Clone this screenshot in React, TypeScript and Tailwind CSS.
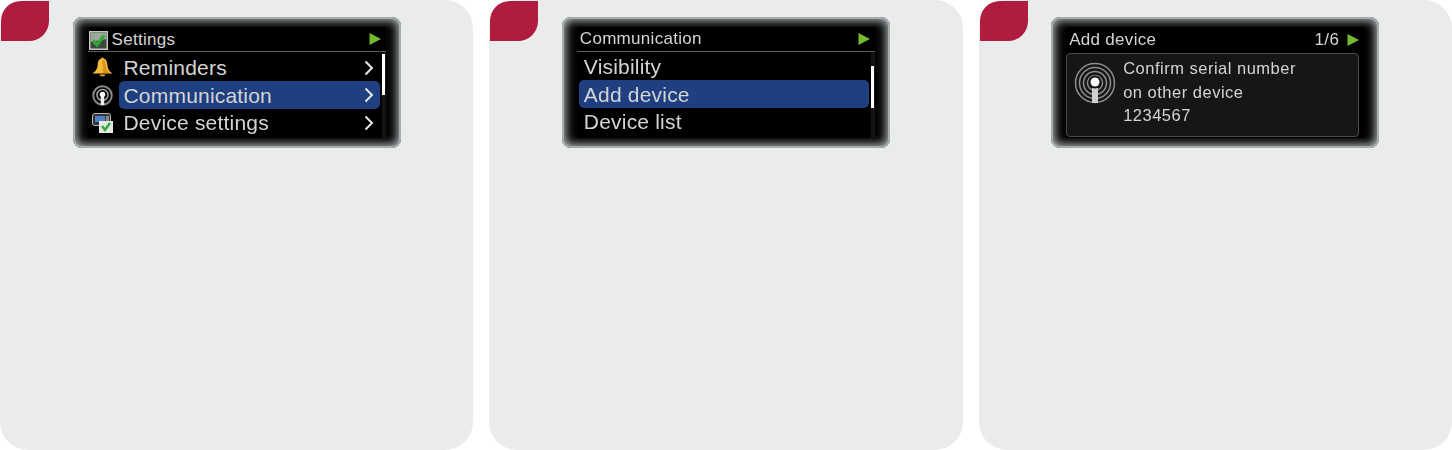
import type { ReactNode } from "react";

const font = { fontFamily: '"Liberation Sans", Arial, sans-serif' };

function PlayArrow() {
  return (
    <svg width="12" height="12" viewBox="0 0 12 12" className="shrink-0">
      <path d="M0.5 0 L12 6 L0.5 12 Z" fill="#74bb30" />
    </svg>
  );
}

function Chevron() {
  return (
    <svg width="10" height="16" viewBox="0 0 10 16" className="shrink-0">
      <path d="M1.5 1.5 L8 8 L1.5 14.5" fill="none" stroke="#e8e8e8" strokeWidth="2" />
    </svg>
  );
}

function CheckIcon() {
  return (
    <svg width="19" height="19" viewBox="0 0 19 19" className="shrink-0">
      <rect x="0.75" y="0.75" width="17.5" height="17.5" fill="#3c4a3c" stroke="#c4c8c4" strokeWidth="1.5" />
      <path d="M2 2 H17 V8 L2 11 Z" fill="#9aa89a" />
      <path d="M4 9.5 L8 14 L15 4.5" fill="none" stroke="#35a83a" strokeWidth="3.2" />
    </svg>
  );
}

function BellIcon() {
  return (
    <svg width="21" height="21" viewBox="0 0 21 21">
      <circle cx="10.5" cy="2" r="1.6" fill="#e0a020" />
      <path d="M10.5 1.5 C7 1.5 6 4 5.6 8 C5.3 12 4 14 0.5 16.5 L20.5 16.5 C17 14 15.7 12 15.4 8 C15 4 14 1.5 10.5 1.5 Z" fill="#f4ba38" />
      <path d="M10.5 3 C13 3 13.5 5 13.8 8 C14 12 15 14 17.5 16 L11 16 Z" fill="#d8931c" />
      <path d="M7.5 17.5 L13.5 17.5 C13 20 8 20 7.5 17.5 Z" fill="#e8a626" />
    </svg>
  );
}

function SmallSignalIcon() {
  return (
    <svg width="21" height="21" viewBox="0 0 42 42" className="shrink-0">
      <circle cx="21" cy="21" r="18.5" fill="none" stroke="#8a8a8a" strokeWidth="4" />
      <circle cx="21" cy="20" r="11" fill="none" stroke="#a6a6a6" strokeWidth="3" />
      <rect x="17.5" y="23" width="7" height="17" fill="#ececec" />
      <circle cx="21" cy="19" r="5.5" fill="#fff" />
    </svg>
  );
}

function LargeSignalIcon() {
  return (
    <svg width="42" height="42" viewBox="0 0 42 42" className="shrink-0">
      {[7.5, 11.5, 15.5, 19.5].map((r) => (
        <circle key={r} cx="21" cy="21" r={r} fill="none" stroke="#8e8e8e" strokeWidth="1.5" />
      ))}
      <rect x="18" y="24" width="6" height="17" fill="#cfcfcf" />
      <circle cx="21" cy="20" r="6.5" fill="#111" />
      <circle cx="21" cy="20" r="4.5" fill="#fff" />
    </svg>
  );
}

function DeviceSettingsIcon() {
  return (
    <svg width="21" height="20" viewBox="0 0 21 20">
      <rect x="0.5" y="0.5" width="18" height="12" rx="2.5" fill="#333" stroke="#b8b8b8" />
      <rect x="3" y="3" width="10" height="6" fill="#4f7fc4" />
      <rect x="14" y="3" width="3" height="6" fill="#8a8a8a" />
      <rect x="7" y="8" width="14" height="12" fill="#e4e8e4" />
      <path d="M10 13 L13 17 L18 10" fill="none" stroke="#36a83a" strokeWidth="2.5" />
    </svg>
  );
}

type Row = { label: string; icon?: ReactNode; active?: boolean };

function Menu({ rows, hasIcons, scrollClass }: { rows: Row[]; hasIcons: boolean; scrollClass: string }) {
  return (
    <div className="flex flex-1">
      <div className={`flex flex-1 flex-col ${hasIcons ? "pt-[2px]" : "pt-px"}`}>
        {rows.map((row) => (
          <div key={row.label} className="flex h-[27.5px] items-center">
            {hasIcons && <div className="flex w-[31px] shrink-0 justify-center pl-[3px] pr-[4px]">{row.icon}</div>}
            <div
              className={`flex h-[28px] flex-1 items-center justify-between rounded-[5px] pr-[6px] text-[21px] tracking-[0.2px] text-[#d4d4d4] ${
                hasIcons ? "pl-[5px]" : "ml-[2px] pl-[5px]"
              } ${row.active ? "bg-[#1f3f80]" : ""}`}
            >
              <span>{row.label}</span>
              {hasIcons && <Chevron />}
            </div>
          </div>
        ))}
      </div>
      <div className="ml-[2px] w-[4px] shrink-0 bg-[#141414]">
        <div className={`w-[3px] bg-white ${scrollClass}`} />
      </div>
    </div>
  );
}

function Device({ children }: { children: ReactNode }) {
  return (
    <div className="h-[131px] w-[328px] rounded-[9px] bg-[#040404] px-[15px] py-[10px] shadow-[inset_0_0_8px_4px_#a8acae,inset_0_0_0_2px_#a8acae]">
      <div className="flex h-[111px] w-[298px] flex-col bg-black blur-[0.4px]">{children}</div>
    </div>
  );
}

function Header({ title, icon, page, ruled }: { title: string; icon?: ReactNode; page?: string; ruled?: boolean }) {
  return (
    <div
      className={`flex h-[25px] shrink-0 items-center justify-between pr-[5px] text-[17px] tracking-[0.3px] text-[#d4d4d4] ${
        ruled ? "border-b border-[#5c5c5c]" : ""
      } ${icon ? "pl-px" : "pl-[3px]"}`}
    >
      <div className={`flex items-center gap-[4px] ${icon ? "pt-[2px]" : ""}`}>
        {icon}
        <span>{title}</span>
      </div>
      <div className="flex items-center gap-[8px]">
        {page && <span>{page}</span>}
        <PlayArrow />
      </div>
    </div>
  );
}

function Panel({ children }: { children: ReactNode }) {
  return (
    <div className="relative h-[450px] flex-1 rounded-[28px] bg-[#eaeceb] pl-[72.5px] pt-[17px]">
      <div className="absolute left-px top-px h-[40px] w-[48px] rounded-br-[20px] rounded-tl-[20px] bg-[#b01c3e]" />
      {children}
    </div>
  );
}

export default function App() {
  return (
    <div className="flex w-[1452px] gap-4 bg-white" style={font}>
      <Panel>
        <Device>
          <Header title="Settings" icon={<CheckIcon />} ruled />
          <Menu
            hasIcons
            scrollClass="mt-[2px] h-[41px]"
            rows={[
              { label: "Reminders", icon: <BellIcon /> },
              { label: "Communication", icon: <SmallSignalIcon />, active: true },
              { label: "Device settings", icon: <DeviceSettingsIcon /> },
            ]}
          />
        </Device>
      </Panel>
      <Panel>
        <Device>
          <Header title="Communication" ruled />
          <Menu
            hasIcons={false}
            scrollClass="mt-[14px] h-[42px]"
            rows={[{ label: "Visibility" }, { label: "Add device", active: true }, { label: "Device list" }]}
          />
        </Device>
      </Panel>
      <Panel>
        <Device>
          <Header title="Add device" page="1/6" />
          <div className="mr-[5px] mt-px flex h-[84px] items-start gap-[7px] rounded-[4px] border border-[#4a4a4a] bg-[#161616] pl-[7px] pt-[3px]">
            <div className="mt-[5px]">
              <LargeSignalIcon />
            </div>
            <div className="text-[16.5px] leading-[23.5px] tracking-[0.5px] text-[#d4d4d4]">
              <div>Confirm serial number</div>
              <div>on other device</div>
              <div>1234567</div>
            </div>
          </div>
        </Device>
      </Panel>
    </div>
  );
}
